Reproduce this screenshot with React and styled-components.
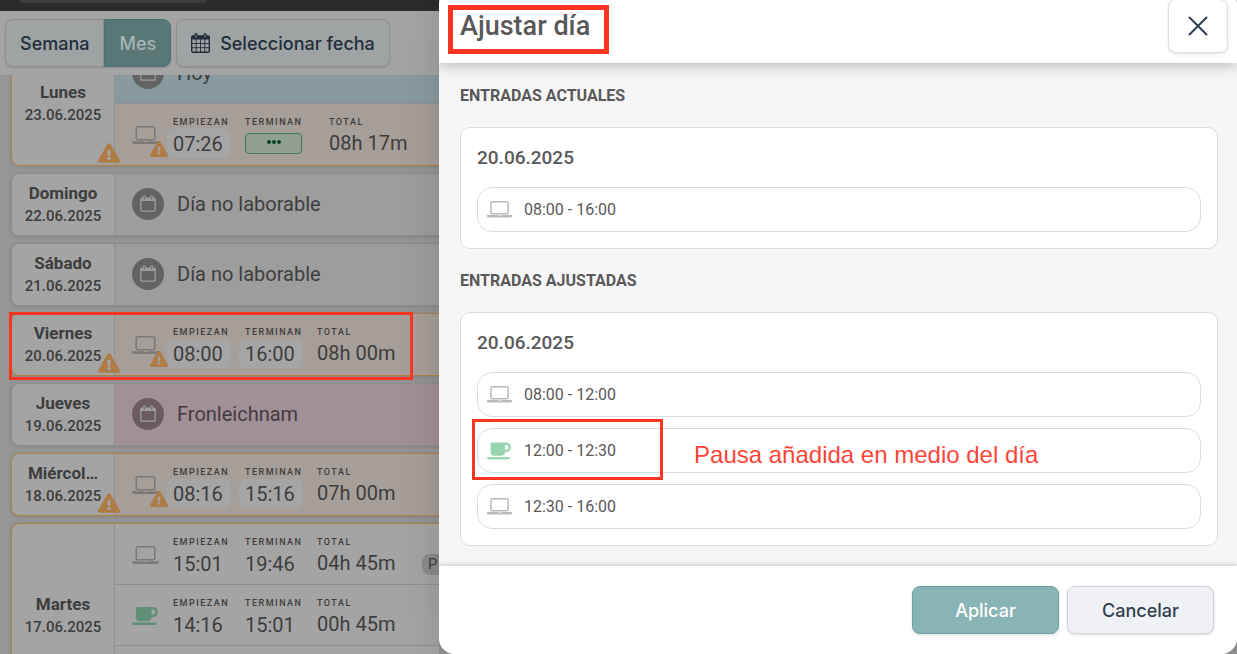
import React from 'react';
import styled, { createGlobalStyle } from 'styled-components';
import { FaCoffee, FaExclamationTriangle } from 'react-icons/fa';

const GlobalStyle = createGlobalStyle`
    * {
        box-sizing: border-box;
    }
    body {
        margin: 0;
        background: #969696;
        font-family: Roboto, sans-serif;
    }
    h1, h2, h3, p {
        margin: 0;
    }
`

const Page = styled.div`
    position: relative;
    height: 100vh;
    overflow: hidden;
    background: #969696;
    color: #3d3d3d;
`

const TopBar = styled.div`
    position: relative;
    z-index: 2;
    height: 11px;
    padding-left: 20px;
    background: #2b2b2b;
`

const TopTab = styled.div`
    width: 186px;
    height: 3px;
    border-radius: 0 0 4px 4px;
    background: #3c3c3c;
`

const Toolbar = styled.div`
    position: relative;
    z-index: 2;
    display: flex;
    gap: 5px;
    padding: 8px 5px;
    background: #a4a4a4;
`

const Group = styled.div`
    display: flex;
`

const ToolButton = styled.button`
    display: flex;
    align-items: center;
    gap: 10px;
    height: 48px;
    padding: 0 14px;
    border: 1px solid ${p => p.$active ? '#477372' : '#8d9093'};
    border-radius: ${p => p.$radius || '8px'};
    background: ${p => p.$active ? '#587775' : '#9fa3a3'};
    box-shadow: 0 1px 2px rgba(0, 0, 0, 0.12);
    color: ${p => p.$active ? '#a9b3b3' : '#222e3b'};
    font-family: Inter, sans-serif;
    font-size: 18px;
    font-weight: 500;
    white-space: nowrap;
`

const List = styled.div`
    display: flex;
    flex-direction: column;
    gap: 7px;
    margin-top: -33px;
    padding: 0 11px;
`

const DayCard = styled.div`
    position: relative;
    display: flex;
    border: 1px solid ${p => p.$warn ? '#b07f42' : '#8d8d8d'};
    border-radius: 8px;
    background: #a4a4a4;
    box-shadow: 0 1px 4px rgba(0, 0, 0, 0.12);
`

const DayLabel = styled.div`
    position: relative;
    display: flex;
    flex-direction: column;
    justify-content: center;
    flex: 0 0 103px;
    border-right: 1px solid #8f8f8f;
    text-align: center;
`

const DayName = styled.div`
    font-size: 17px;
    line-height: 23px;
    font-weight: 700;
`

const DayDate = styled.div`
    font-size: 15px;
    line-height: 23px;
    font-weight: 500;
`

const DayWarning = styled(FaExclamationTriangle)`
    position: absolute;
    right: -6px;
    bottom: 1px;
    width: 22px;
    height: 22px;
    color: #ad7b43;
`

const Rows = styled.div`
    flex: 1;
    min-width: 0;
    border-radius: 0 7px 7px 0;
    overflow: hidden;
`

const rowColors = {
    off: '#9d9d9d',
    holiday: '#a29097',
    today: '#899a9f',
    warn: '#a69e98',
    plain: '#a4a4a4',
}

const Row = styled.div`
    display: flex;
    align-items: center;
    height: 61px;
    padding-left: 17px;
    background: ${p => rowColors[p.$kind]};
    color: ${p => p.$kind === 'holiday' ? '#443a3e' : '#3d3d3d'};
    & + & {
        box-shadow: 0 -1px 0 #8f8f8f;
    }
`

const Circle = styled.span`
    display: flex;
    align-items: center;
    justify-content: center;
    width: 32px;
    height: 32px;
    margin: 0 13px 2px 0;
    border-radius: 50%;
    background: ${p => p.$kind === 'holiday' ? '#6b5c61' : '#636363'};
`

const RowText = styled.span`
    margin-bottom: 2px;
    font-size: 20px;
`

const IconSlot = styled.span`
    position: relative;
    display: flex;
    align-items: center;
    flex: 0 0 35px;
    height: 22px;
    color: ${p => p.$pause ? '#5f8f76' : '#7d7977'};
`

const SmallWarning = styled(FaExclamationTriangle)`
    position: absolute;
    left: 18px;
    top: 16px;
    width: 18px;
    height: 18px;
    color: #ad7b43;
`

const Field = styled.div`
    flex: 0 0 ${p => p.$width || '64px'};
    margin-right: 8px;
    padding-top: 5px;
`

const FieldLabel = styled.div`
    padding-left: 6px;
    font-size: 9px;
    line-height: 13px;
    font-weight: 500;
    letter-spacing: 1.5px;
`

const FieldValue = styled.div`
    height: 29px;
    padding-left: 6px;
    border-radius: 6px;
    background: ${p => p.$boxed ? '#a5a5a5' : 'transparent'};
    font-size: 20px;
    line-height: ${p => p.$total ? '29px' : '31px'};
    white-space: nowrap;
`

const RunningButton = styled.button`
    display: flex;
    align-items: center;
    justify-content: center;
    gap: 1px;
    width: 57px;
    height: 21px;
    margin: 4px 0 4px 6px;
    padding: 0 0 3px;
    border: 1px solid #3f7a55;
    border-radius: 4px;
    background: #92a091;
`

const Dot = styled.span`
    width: 4px;
    height: 4px;
    border-radius: 50%;
    background: #0c4423;
`

const Badge = styled.span`
    width: 60px;
    height: 21px;
    margin-top: 20px;
    padding-left: 6px;
    border-radius: 8px;
    background: #8d8a8a;
    font-size: 15px;
    line-height: 21px;
`

const Mark = styled.span`
    position: absolute;
    pointer-events: none;
    border: 3px solid #fc3520;
`

const DayMark = styled(Mark)`
    left: -3px;
    top: -2px;
    width: 404px;
    height: 68px;
`

const Modal = styled.section`
    position: absolute;
    z-index: 5;
    top: -11px;
    right: 0;
    bottom: 0;
    left: 439px;
    display: flex;
    flex-direction: column;
    overflow: hidden;
    border-radius: 16px;
    background: #f6f6f6;
    color: #595959;
`

const ModalShade = styled.div`
    position: absolute;
    z-index: 4;
    top: 0;
    right: 0;
    bottom: 0;
    left: 439px;
    background: #8c8c8c;
    box-shadow: 0 0 40px rgba(0, 0, 0, 0.14);
`

const ModalHeader = styled.header`
    position: relative;
    z-index: 1;
    display: flex;
    align-items: center;
    justify-content: space-between;
    height: 74px;
    padding: 0 9px 0 21px;
    background: #fff;
    box-shadow: 0 2px 14px rgba(0, 0, 0, 0.28);
`

const Title = styled.h1`
    position: relative;
    font-size: 27px;
    line-height: 32px;
    font-weight: 500;
`

const TitleMark = styled(Mark)`
    left: -12px;
    top: -5px;
    width: 161px;
    height: 49px;
    border-width: 5px;
`

const CloseButton = styled.button`
    display: flex;
    align-items: center;
    justify-content: center;
    width: 60px;
    height: 54px;
    padding: 0;
    border: 1px solid #dfdfdf;
    border-radius: 8px;
    background: #fff;
    box-shadow: 0 1px 3px rgba(0, 0, 0, 0.12);
`

const ModalBody = styled.div`
    flex: 1;
    display: flex;
    flex-direction: column;
    gap: 20px;
    padding: 21px 19px 0 21px;
`

const SectionTitle = styled.h2`
    margin-bottom: 19px;
    font-size: 16px;
    line-height: 24px;
    font-weight: 700;
`

const Card = styled.div`
    padding: 16px;
    border: 1px solid #dcdcdc;
    border-radius: 10px;
    background: #fff;
`

const CardDate = styled.h3`
    margin-bottom: 15px;
    font-size: 19px;
    line-height: 28px;
    font-weight: 500;
`

const Entries = styled.div`
    display: flex;
    flex-direction: column;
    gap: 11px;
`

const Entry = styled.div`
    position: relative;
    display: flex;
    align-items: center;
    height: 45px;
    padding-left: 9px;
    border: 1px solid #dcdcdc;
    border-radius: 15px;
    font-size: 16px;
`

const EntryIcon = styled.span`
    display: flex;
    align-items: center;
    width: 37px;
    color: ${p => p.$pause ? '#97d5b2' : '#bdb7b6'};
`

const EntryMark = styled(Mark)`
    left: -6px;
    top: -10px;
    width: 191px;
    height: 61px;
`

const Note = styled.span`
    margin-left: 78px;
    padding-top: 9px;
    color: #fd4539;
    font-family: "Liberation Sans", sans-serif;
    font-size: 24px;
    line-height: 28px;
`

const ModalFooter = styled.footer`
    position: relative;
    display: flex;
    justify-content: flex-end;
    gap: 8px;
    padding: 20px 23px;
    background: #fff;
    box-shadow: 0 -1px 5px rgba(0, 0, 0, 0.2);
`

const ActionButton = styled.button`
    width: 147px;
    height: 48px;
    border: 1px solid ${p => p.$primary ? '#66a09f' : '#cfd2d8'};
    border-radius: 8px;
    background: ${p => p.$primary ? '#89b4b5' : '#eff1f4'};
    box-shadow: 0 1px 3px rgba(0, 0, 0, 0.14);
    color: ${p => p.$primary ? '#fff' : '#2f3f51'};
    font-family: Inter, sans-serif;
    font-size: 18px;
    font-weight: 500;
`

const Laptop = ({ width = 27 }) => (
    <svg width={width} height={width * 18 / 27} viewBox="0 0 27 18">
        <rect x="4.2" y="0.8" width="18.6" height="13" rx="1.6" fill="none" stroke="currentColor" strokeWidth="1.6" />
        <path fill="currentColor" d="M0 15.2h12l.4.7h2.2l.4-.7h12v1c0 1-1.3 1.7-2.6 1.7h-21.8c-1.3 0-2.6-.7-2.6-1.7z" />
    </svg>
)

const CalendarSolid = () => (
    <svg width="16" height="17" viewBox="0 0 16 17" fill="none" stroke="#9d9d9d">
        <rect x="0.8" y="3.2" width="14.4" height="13" rx="1" strokeWidth="1.3" />
        <path d="M1 4.5h14" strokeWidth="3" />
        <path d="M4.3 1.5v2.5M11.7 1.5v2.5" strokeWidth="2.6" strokeLinecap="round" />
        <path d="M4.3 1.5v3M11.7 1.5v3" stroke="#636363" strokeWidth="0.9" />
    </svg>
)

const CalendarGrid = () => (
    <svg width="19" height="20" viewBox="0 0 19 20" fill="none" stroke="#222e3b">
        <rect x="0.7" y="3" width="17.6" height="16.2" rx="1.2" strokeWidth="1.4" />
        <path d="M1 4.7h17" strokeWidth="3.6" />
        <path d="M5 1.7v3M14 1.7v3" strokeWidth="3.2" strokeLinecap="round" />
        <path d="M5 1.7v3M14 1.7v3" stroke="#9fa3a3" strokeWidth="0.8" />
        <path d="M5.2 6v13M9.5 6v13M13.8 6v13M1 10.5h17M1 14.7h17" strokeWidth="0.9" />
    </svg>
)

const Close = () => (
    <svg width="20" height="20" viewBox="0 0 20 20" stroke="#2f3f51" strokeWidth="2" strokeLinecap="round">
        <path d="M1.5 1.5l17 17M18.5 1.5l-17 17" />
    </svg>
)

const days = [
    {
        name: 'Lunes', date: '23.06.2025', warn: true,
        rows: [
            { kind: 'today', text: 'Hoy' },
            { kind: 'warn', start: '07:26', running: true, total: '08h 17m' },
        ],
    },
    { name: 'Domingo', date: '22.06.2025', rows: [{ kind: 'off', text: 'Día no laborable' }] },
    { name: 'Sábado', date: '21.06.2025', rows: [{ kind: 'off', text: 'Día no laborable' }] },
    {
        name: 'Viernes', date: '20.06.2025', warn: true, marked: true,
        rows: [{ kind: 'warn', start: '08:00', end: '16:00', total: '08h 00m' }],
    },
    { name: 'Jueves', date: '19.06.2025', rows: [{ kind: 'holiday', text: 'Fronleichnam' }] },
    {
        name: 'Miércol…', date: '18.06.2025', warn: true,
        rows: [{ kind: 'warn', start: '08:16', end: '15:16', total: '07h 00m' }],
    },
    {
        name: 'Martes', date: '17.06.2025', warn: true,
        rows: [
            { kind: 'plain', start: '15:01', end: '19:46', total: '04h 45m', badge: 'P' },
            { kind: 'plain', pause: true, start: '14:16', end: '15:01', total: '00h 45m' },
            { kind: 'plain' },
        ],
    },
]

const sections = [
    { title: 'ENTRADAS ACTUALES', entries: [{ time: '08:00 - 16:00' }] },
    {
        title: 'ENTRADAS AJUSTADAS',
        entries: [
            { time: '08:00 - 12:00' },
            { time: '12:00 - 12:30', pause: true, note: 'Pausa añadida en medio del día' },
            { time: '12:30 - 16:00' },
        ],
    },
]

const TimeRow = ({ row }) => {
    const boxed = row.kind === 'warn';
    return (
        <Row $kind={row.kind}>
            <IconSlot $pause={row.pause}>
                {row.pause ? <FaCoffee size={26} /> : <Laptop />}
                {boxed && <SmallWarning />}
            </IconSlot>
            <Field>
                <FieldLabel>EMPIEZAN</FieldLabel>
                <FieldValue $boxed={boxed}>{row.start}</FieldValue>
            </Field>
            <Field $width={row.running ? '76px' : '64px'}>
                <FieldLabel>TERMINAN</FieldLabel>
                {row.running
                    ? <RunningButton aria-label='Terminar'><Dot /><Dot /><Dot /></RunningButton>
                    : <FieldValue $boxed={boxed}>{row.end}</FieldValue>}
            </Field>
            <Field $width='103px'>
                <FieldLabel>TOTAL</FieldLabel>
                <FieldValue $total>{row.total}</FieldValue>
            </Field>
            {row.badge && <Badge>{row.badge}</Badge>}
        </Row>
    )
}

const DayRow = ({ row }) => {
    if (row.text) {
        return (
            <Row $kind={row.kind}>
                <Circle $kind={row.kind}><CalendarSolid /></Circle>
                <RowText>{row.text}</RowText>
            </Row>
        )
    }
    return row.start ? <TimeRow row={row} /> : <Row $kind={row.kind} />
}

const App = () => {
    return (
        <Page>
            <GlobalStyle />
            <TopBar><TopTab /></TopBar>
            <Toolbar>
                <Group>
                    <ToolButton $radius='8px 0 0 8px'>Semana</ToolButton>
                    <ToolButton $active $radius='0 8px 8px 0'>Mes</ToolButton>
                </Group>
                <ToolButton><CalendarGrid />Seleccionar fecha</ToolButton>
            </Toolbar>
            <List>
                {days.map(day => (
                    <DayCard key={day.date} $warn={day.warn}>
                        <DayLabel>
                            <DayName>{day.name}</DayName>
                            <DayDate>{day.date}</DayDate>
                            {day.warn && <DayWarning />}
                        </DayLabel>
                        <Rows>
                            {day.rows.map((row, i) => <DayRow key={i} row={row} />)}
                        </Rows>
                        {day.marked && <DayMark />}
                    </DayCard>
                ))}
            </List>
            <ModalShade />
            <Modal role='dialog' aria-labelledby='modal-title'>
                <ModalHeader>
                    <Title id='modal-title'>Ajustar día<TitleMark /></Title>
                    <CloseButton aria-label='Cerrar'><Close /></CloseButton>
                </ModalHeader>
                <ModalBody>
                    {sections.map(section => (
                        <div key={section.title}>
                            <SectionTitle>{section.title}</SectionTitle>
                            <Card>
                                <CardDate>20.06.2025</CardDate>
                                <Entries>
                                    {section.entries.map(entry => (
                                        <Entry key={entry.time}>
                                            <EntryIcon $pause={entry.pause}>
                                                {entry.pause ? <FaCoffee size={24} /> : <Laptop width={25} />}
                                            </EntryIcon>
                                            {entry.time}
                                            {entry.note && <EntryMark />}
                                            {entry.note && <Note>{entry.note}</Note>}
                                        </Entry>
                                    ))}
                                </Entries>
                            </Card>
                        </div>
                    ))}
                </ModalBody>
                <ModalFooter>
                    <ActionButton $primary>Aplicar</ActionButton>
                    <ActionButton>Cancelar</ActionButton>
                </ModalFooter>
            </Modal>
        </Page>
    );
}

export default App;
